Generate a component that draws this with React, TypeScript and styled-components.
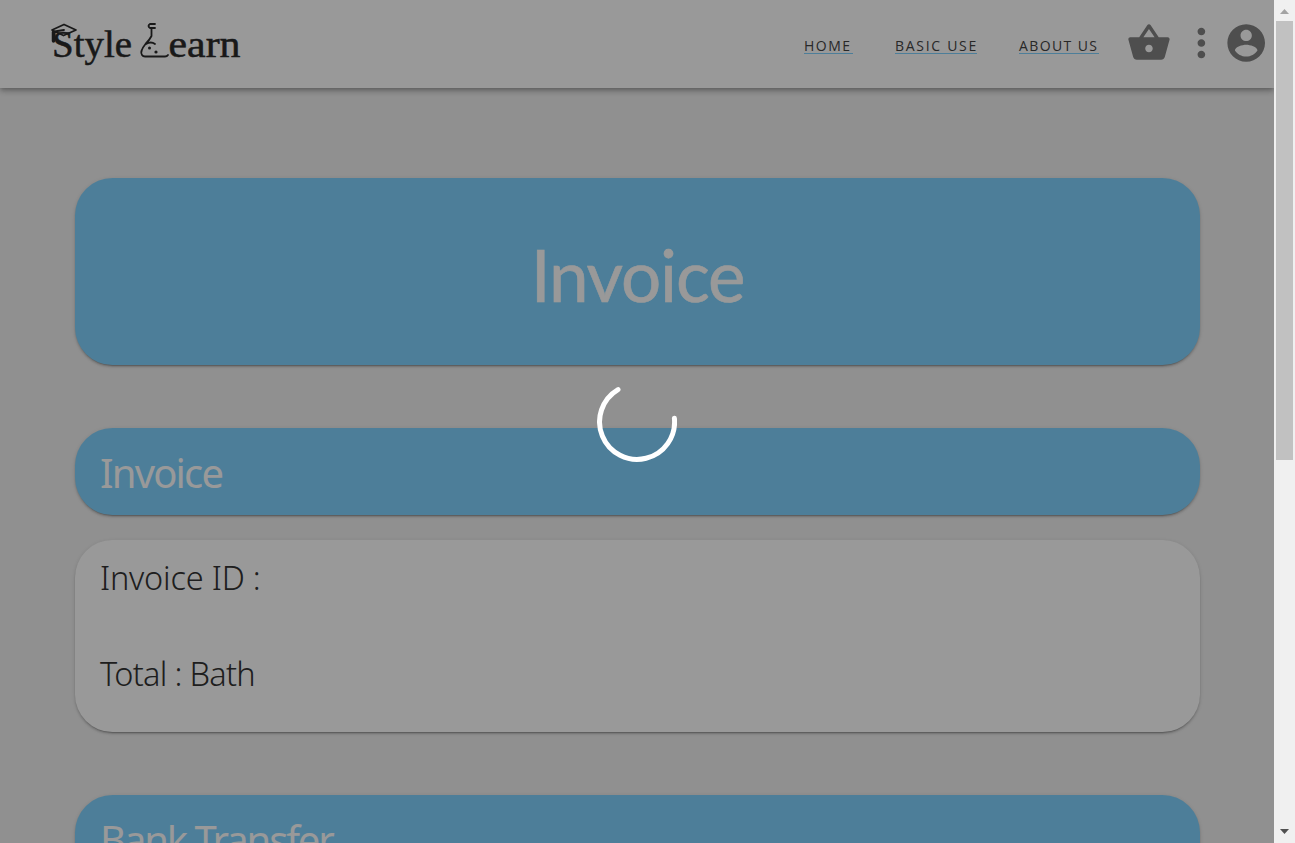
import React from "react";
import styled, { createGlobalStyle } from "styled-components";

const GlobalStyle = createGlobalStyle`
  html, body { margin: 0; height: 100%; overflow: hidden; }
  *, *::before, *::after { box-sizing: border-box; }
`;

const Screen = styled.div`
  display: flex;
  width: 100%;
  height: 100vh;
  overflow: hidden;
`;

const Viewport = styled.div`
  position: relative;
  flex: 1;
  min-width: 0;
  overflow: hidden;
  background: #f1f1f1;
  color: #333;
`;

const Header = styled.header`
  position: relative;
  display: flex;
  align-items: center;
  height: 88px;
  padding: 0 9px 0 44px;
  background: #fff;
  box-shadow: 0 2px 4px -1px rgba(0, 0, 0, 0.2), 0 4px 5px rgba(0, 0, 0, 0.14), 0 1px 10px rgba(0, 0, 0, 0.12);
`;

const LogoArt = styled.svg`
  display: block;
  width: 204px;
  height: 60px;
  margin-right: auto;
`;

const Nav = styled.nav`
  display: flex;
  gap: 42px;
  padding-top: 5px;
`;

const NavLink = styled.a<{ $spacing: number; $width: number }>`
  width: ${({ $width }) => $width}px;
  height: 15px;
  border-bottom: 1px solid #80d3ff;
  color: #444;
  font: 400 14px/14px "Open Sans", sans-serif;
  letter-spacing: ${({ $spacing }) => $spacing}px;
  white-space: nowrap;
`;

const Icon = styled.svg<{ $size: number; $gap: number }>`
  display: block;
  flex: none;
  width: ${({ $size }) => $size}px;
  height: ${({ $size }) => $size}px;
  margin-left: ${({ $gap }) => $gap}px;
  margin-bottom: 2px;
  fill: #828282;
`;

const Content = styled.main`
  display: flex;
  flex-direction: column;
  padding: 90px 74px 0 75px;
`;

const Panel = styled.section<{ $tone: "blue" | "white" }>`
  flex: none;
  border-radius: 37.5px;
  background: ${({ $tone }) => ($tone === "blue" ? "#80d3ff" : "#fff")};
  box-shadow: 0 3px 1px -2px rgba(0, 0, 0, 0.2), 0 2px 2px rgba(0, 0, 0, 0.14), 0 1px 5px rgba(0, 0, 0, 0.12);
`;

const Hero = styled(Panel)`
  display: flex;
  align-items: center;
  justify-content: center;
  height: 187px;
  padding-top: 7px;
`;

const HeroTitle = styled.h1`
  margin: 0;
  color: #fff;
  font: 400 71px/90px Lato, sans-serif;
  letter-spacing: -1.2px;
  -webkit-text-stroke: 0.6px #fff;
`;

const SectionHead = styled(Panel)`
  display: flex;
  align-items: center;
  height: 87px;
  margin-top: 63px;
  padding: 3px 25px 0;
`;

const SectionTitle = styled.h2<{ $spacing: number }>`
  margin: 0;
  color: #fff;
  font: 400 40px/50px "Noto Sans", sans-serif;
  letter-spacing: ${({ $spacing }) => $spacing}px;
`;

const Card = styled(Panel)`
  display: flex;
  flex-direction: column;
  gap: 48px;
  height: 192px;
  margin-top: 25px;
  padding: 14px 25px;
`;

const Detail = styled.p<{ $spacing: number }>`
  margin: 0;
  font: 300 32.5px/48px "Noto Sans", sans-serif;
  letter-spacing: ${({ $spacing }) => $spacing}px;
`;

const Backdrop = styled.div`
  position: absolute;
  inset: 0;
  display: flex;
  align-items: center;
  justify-content: center;
  background: rgba(0, 0, 0, 0.4);
`;

const Spinner = styled.svg`
  width: 80px;
  height: 80px;
  fill: none;
  stroke: #fff;
  stroke-width: 5;
  stroke-linecap: round;
`;

const Scrollbar = styled.aside`
  display: flex;
  flex-direction: column;
  justify-content: space-between;
  width: 21px;
  padding: 9px 2px 9px;
  background: #f0f0f0;
`;

const Arrow = styled.svg`
  display: block;
  flex: none;
  width: 9px;
  height: 5px;
  margin-left: 4px;
`;

const Thumb = styled.div`
  width: 17px;
  height: 439px;
  margin: 7px 0 auto;
  background: #c1c1c1;
`;

function Logo() {
  return (
    <LogoArt viewBox="44 14 204 60" role="img" aria-label="Style Learn">
      <g fill="#2b2b2b" stroke="#2b2b2b" strokeWidth="0.5" fontFamily="'Liberation Serif', serif" fontSize="37">
        <text x="52" y="57" textLength="80" lengthAdjust="spacingAndGlyphs">Style</text>
        <text x="168.5" y="57" textLength="72" lengthAdjust="spacingAndGlyphs">earn</text>
      </g>
      <g fill="none" stroke="#2b2b2b" strokeWidth="1.8" strokeLinejoin="round" strokeLinecap="round">
        <path d="M52 30 64 24.5 76 30 63.5 35.5ZM64 30 54.5 31.5v8" />
        <path d="M53.5 32v9" strokeWidth="3.5" />
        <path d="M155 24h-5q-3 2 0 4h5M151.5 28v8q-2 4-6 8-6 7.5-3.5 11 1 1.5 3 1.5h20q2 0 3-1.5M146 44q5-3 9 0" />
      </g>
      <circle cx="149.5" cy="48" r="1.5" fill="#2b2b2b" />
      <circle cx="156" cy="52" r="1.6" fill="#2b2b2b" />
    </LogoArt>
  );
}

export default function App() {
  return (
    <>
      <GlobalStyle />
      <Screen>
        <Viewport>
          <Header>
            <Logo />
            <Nav>
              <NavLink $width={49} $spacing={1.5}>HOME</NavLink>
              <NavLink $width={82} $spacing={1.7}>BASIC USE</NavLink>
              <NavLink $width={80} $spacing={1.4}>ABOUT US</NavLink>
            </Nav>
            <Icon $size={45} $gap={27} viewBox="-0.25 0.3 24 24">
              <path d="M17.21 9l-4.38-6.56a1 1 0 0 0-1.66 0L6.79 9H2c-.55 0-1 .45-1 1 0 .09.01.18.04.27l2.54 9.27c.23.84 1 1.46 1.92 1.46h13c.92 0 1.69-.62 1.93-1.46l2.54-9.27L23 10c0-.55-.45-1-1-1h-4.79zM9 9l3-4.4L15 9H9zm3 8c-1.1 0-2-.9-2-2s.9-2 2-2 2 .9 2 2-.9 2-2 2z" />
            </Icon>
            <Icon $size={46} $gap={7} viewBox="-0.2 0 24 24">
              <path d="M12 8c1.1 0 2-.9 2-2s-.9-2-2-2-2 .9-2 2 .9 2 2 2zm0 2c-1.1 0-2 .9-2 2s.9 2 2 2 2-.9 2-2-.9-2-2-2zm0 6c-1.1 0-2 .9-2 2s.9 2 2 2 2-.9 2-2-.9-2-2-2z" />
            </Icon>
            <Icon $size={38} $gap={3} viewBox="1.8 2 20.2 20">
              <path d="M12 2C6.48 2 2 6.48 2 12s4.48 10 10 10 10-4.48 10-10S17.52 2 12 2zm0 3c1.66 0 3 1.34 3 3s-1.34 3-3 3-3-1.34-3-3 1.34-3 3-3zm0 14.2c-2.5 0-4.71-1.28-6-3.22.03-1.99 4-3.08 6-3.08 1.99 0 5.97 1.09 6 3.08-1.29 1.94-3.5 3.22-6 3.22z" />
            </Icon>
          </Header>
          <Content>
            <Hero $tone="blue">
              <HeroTitle>Invoice</HeroTitle>
            </Hero>
            <SectionHead $tone="blue">
              <SectionTitle $spacing={-1.8}>Invoice</SectionTitle>
            </SectionHead>
            <Card $tone="white">
              <Detail $spacing={-0.2}>Invoice ID :</Detail>
              <Detail $spacing={-0.7}>Total : Bath</Detail>
            </Card>
            <SectionHead $tone="blue">
              <SectionTitle $spacing={-2.1}>Bank Transfer</SectionTitle>
            </SectionHead>
          </Content>
          <Backdrop>
            <Spinner viewBox="0 0 80 80">
              <path d="M77.4 36.3A37.5 37.5 0 1 1 21 7.6" />
            </Spinner>
          </Backdrop>
        </Viewport>
        <Scrollbar>
          <Arrow viewBox="0 0 9 5"><path d="M0 5 4.5 0 9 5Z" fill="#a3a3a3" /></Arrow>
          <Thumb />
          <Arrow viewBox="0 0 9 5"><path d="M0 0h9L4.5 5Z" fill="#505050" /></Arrow>
        </Scrollbar>
      </Screen>
    </>
  );
}
